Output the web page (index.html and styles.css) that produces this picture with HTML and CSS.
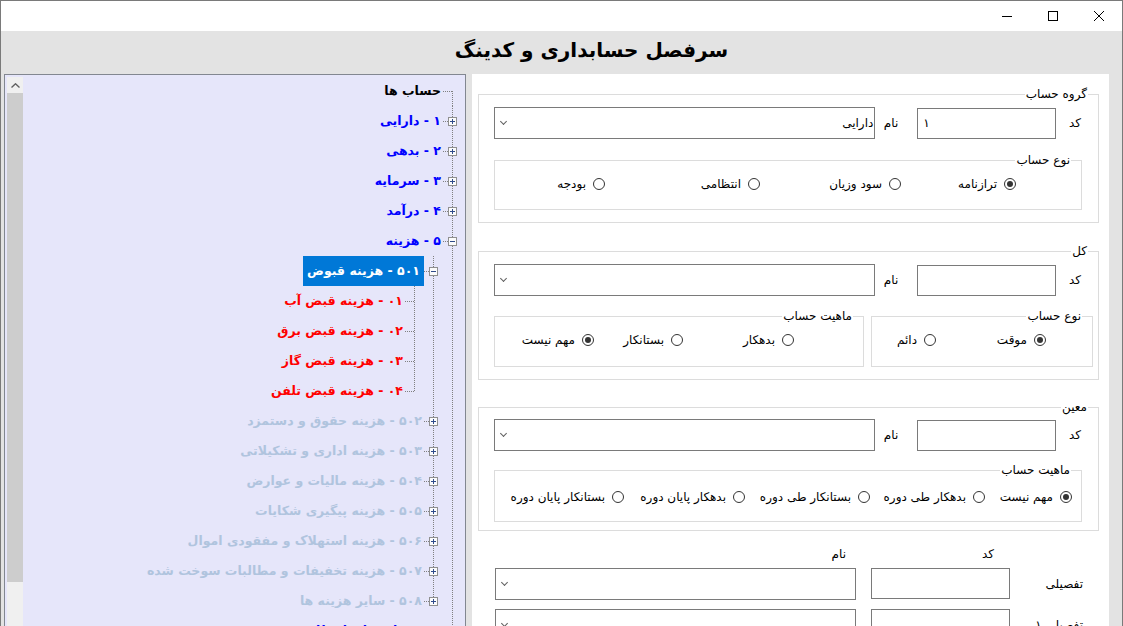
FILE: index.html
```html
<!DOCTYPE html>
<html lang="fa">
<head>
    <meta charset="UTF-8">
    <title>سرفصل حسابداری و کدینگ</title>
    <link rel="stylesheet" href="styles.css">
</head>
<body>

<div class="window">

    <!-- title bar buttons -->
    <div class="titlebar">
        <span class="ctl">
            <svg width="10" height="10" viewBox="0 0 10 10"><line x1="0" y1="5.5" x2="10" y2="5.5" stroke="#000" stroke-width="1"/></svg>
        </span>
        <span class="ctl">
            <svg width="10" height="10" viewBox="0 0 10 10"><rect x="0.5" y="0.5" width="9" height="9" fill="none" stroke="#000" stroke-width="1"/></svg>
        </span>
        <span class="ctl">
            <svg width="10" height="10" viewBox="0 0 10 10"><path d="M0 0 L10 10 M10 0 L0 10" stroke="#000" stroke-width="1"/></svg>
        </span>
    </div>

    <div class="caption">
        <h1>سرفصل حسابداری و کدینگ</h1>
    </div>

    <div class="main">

        <!-- accounts tree -->
        <div class="tree-panel">
            <div class="scrollbar">
                <div class="sb-up">
                    <svg width="9" height="5" viewBox="0 0 9 5"><polyline points="0.5,4.5 4.5,0.8 8.5,4.5" fill="none" stroke="#606060" stroke-width="1.4"/></svg>
                </div>
                <div class="sb-thumb"></div>
                <div class="sb-track"></div>
            </div>

            <div class="tree">
                <div class="node c-black">
                    <span class="col first"></span>
                    <span class="label">حساب ها</span>
                </div>
                <div class="node c-blue">
                    <span class="col tee"><i class="box plus"></i></span>
                    <span class="label">۱ - دارایی</span>
                </div>
                <div class="node c-blue">
                    <span class="col tee"><i class="box plus"></i></span>
                    <span class="label">۲ - بدهی</span>
                </div>
                <div class="node c-blue">
                    <span class="col tee"><i class="box plus"></i></span>
                    <span class="label">۳ - سرمایه</span>
                </div>
                <div class="node c-blue">
                    <span class="col tee"><i class="box plus"></i></span>
                    <span class="label">۴ - درآمد</span>
                </div>
                <div class="node c-blue">
                    <span class="col tee"><i class="box minus"></i></span>
                    <span class="label">۵ - هزینه</span>
                </div>

                <div class="node selected">
                    <span class="col pipe"></span>
                    <span class="col tee"><i class="box minus"></i></span>
                    <span class="label">۵۰۱ - هزینه قبوض</span>
                </div>
                <div class="node c-red">
                    <span class="col pipe"></span>
                    <span class="col pipe"></span>
                    <span class="col tee"></span>
                    <span class="label">۰۱ - هزینه قبض آب</span>
                </div>
                <div class="node c-red">
                    <span class="col pipe"></span>
                    <span class="col pipe"></span>
                    <span class="col tee"></span>
                    <span class="label">۰۲ - هزینه قبض برق</span>
                </div>
                <div class="node c-red">
                    <span class="col pipe"></span>
                    <span class="col pipe"></span>
                    <span class="col tee"></span>
                    <span class="label">۰۳ - هزینه قبض گاز</span>
                </div>
                <div class="node c-red">
                    <span class="col pipe"></span>
                    <span class="col pipe"></span>
                    <span class="col elbow"></span>
                    <span class="label">۰۴ - هزینه قبض تلفن</span>
                </div>

                <div class="node c-gray">
                    <span class="col pipe"></span>
                    <span class="col tee"><i class="box plus"></i></span>
                    <span class="label">۵۰۲ - هزینه حقوق و دستمزد</span>
                </div>
                <div class="node c-gray">
                    <span class="col pipe"></span>
                    <span class="col tee"><i class="box plus"></i></span>
                    <span class="label">۵۰۳ - هزینه اداری و تشکیلاتی</span>
                </div>
                <div class="node c-gray">
                    <span class="col pipe"></span>
                    <span class="col tee"><i class="box plus"></i></span>
                    <span class="label">۵۰۴ - هزینه مالیات و عوارض</span>
                </div>
                <div class="node c-gray">
                    <span class="col pipe"></span>
                    <span class="col tee"><i class="box plus"></i></span>
                    <span class="label">۵۰۵ - هزینه پیگیری شکایات</span>
                </div>
                <div class="node c-gray">
                    <span class="col pipe"></span>
                    <span class="col tee"><i class="box plus"></i></span>
                    <span class="label">۵۰۶ - هزینه استهلاک و مفقودی اموال</span>
                </div>
                <div class="node c-gray">
                    <span class="col pipe"></span>
                    <span class="col tee"><i class="box plus"></i></span>
                    <span class="label">۵۰۷ - هزینه تخفیفات و مطالبات سوخت شده</span>
                </div>
                <div class="node c-gray">
                    <span class="col pipe"></span>
                    <span class="col elbow"><i class="box plus"></i></span>
                    <span class="label">۵۰۸ - سایر هزینه ها</span>
                </div>

                <div class="node c-blue">
                    <span class="col tee"><i class="box plus"></i></span>
                    <span class="label">۶ - حساب های انتظامی</span>
                </div>
            </div>
        </div>

        <!-- account editor -->
        <div class="form-panel">

            <fieldset class="group g1">
                <legend>گروه حساب</legend>
                <div class="field-row">
                    <span class="lbl-code">کد</span>
                    <span class="textbox">۱</span>
                    <span class="lbl-name">نام</span>
                    <span class="combo"><span class="combo-text">دارایی</span><i class="chev"></i></span>
                </div>
                <fieldset class="sub">
                    <legend>نوع حساب</legend>
                    <div class="radios r-g1">
                        <label class="radio"><i class="dot on"></i>ترازنامه</label>
                        <label class="radio"><i class="dot"></i>سود وزیان</label>
                        <label class="radio"><i class="dot"></i>انتظامی</label>
                        <label class="radio"><i class="dot"></i>بودجه</label>
                    </div>
                </fieldset>
            </fieldset>

            <fieldset class="group g2">
                <legend>کل</legend>
                <div class="field-row">
                    <span class="lbl-code">کد</span>
                    <span class="textbox"></span>
                    <span class="lbl-name">نام</span>
                    <span class="combo"><span class="combo-text"></span><i class="chev"></i></span>
                </div>
                <div class="sub-pair">
                    <fieldset class="sub kind">
                        <legend>نوع حساب</legend>
                        <div class="radios r-kind">
                            <label class="radio"><i class="dot on"></i>موقت</label>
                            <label class="radio"><i class="dot"></i>دائم</label>
                        </div>
                    </fieldset>
                    <fieldset class="sub nature">
                        <legend>ماهیت حساب</legend>
                        <div class="radios r-nature">
                            <label class="radio"><i class="dot"></i>بدهکار</label>
                            <label class="radio"><i class="dot"></i>بستانکار</label>
                            <label class="radio"><i class="dot on"></i>مهم نیست</label>
                        </div>
                    </fieldset>
                </div>
            </fieldset>

            <fieldset class="group g3">
                <legend>معین</legend>
                <div class="field-row">
                    <span class="lbl-code">کد</span>
                    <span class="textbox"></span>
                    <span class="lbl-name">نام</span>
                    <span class="combo"><span class="combo-text"></span><i class="chev"></i></span>
                </div>
                <fieldset class="sub">
                    <legend>ماهیت حساب</legend>
                    <div class="radios r-g3">
                        <label class="radio"><i class="dot on"></i>مهم نیست</label>
                        <label class="radio"><i class="dot"></i>بدهکار طی دوره</label>
                        <label class="radio"><i class="dot"></i>بستانکار طی دوره</label>
                        <label class="radio"><i class="dot"></i>بدهکار پایان دوره</label>
                        <label class="radio"><i class="dot"></i>بستانکار پایان دوره</label>
                    </div>
                </fieldset>
            </fieldset>

            <div class="detail-grid">
                <span></span>
                <span class="head head-code">کد</span>
                <span class="head head-name">نام</span>

                <span class="row-lbl">تفصیلی</span>
                <span class="textbox"></span>
                <span class="combo"><span class="combo-text"></span><i class="chev"></i></span>

                <span class="row-lbl">تفصیلی ۱</span>
                <span class="textbox"></span>
                <span class="combo"><span class="combo-text"></span><i class="chev"></i></span>
            </div>
        </div>

    </div>
</div>

</body>
</html>
```

FILE: styles.css
```css
/* Base */
* {
    box-sizing: border-box;
}

body {
    margin: 0;
    font-family: "DejaVu Sans", sans-serif;
    overflow: hidden;
}

.window {
    width: 1123px;
    height: 626px;
    border: 1px solid #7a7a7a;
    border-bottom: none;
    background: #e3e3e3;
    display: flex;
    flex-direction: column;
    overflow: hidden;
}

/* Title bar */
.titlebar {
    height: 30px;
    flex-shrink: 0;
    background: #fff;
    display: flex;
    justify-content: flex-end;
}

.ctl {
    width: 46px;
    height: 30px;
    display: flex;
    align-items: center;
    justify-content: center;
}

.caption {
    height: 43px;
    flex-shrink: 0;
    display: flex;
    align-items: center;
    justify-content: center;
    padding: 0 0 6px 60px;
}

.caption h1 {
    margin: 0;
    font-size: 20px;
    font-weight: bold;
    direction: rtl;
}

.main {
    flex: 1;
    min-height: 0;
    display: flex;
    gap: 6px;
    padding-left: 3px;
}

/* Tree panel */
.tree-panel {
    width: 462px;
    flex-shrink: 0;
    display: flex;
    background: #e6e6fa;
    border: 1px solid #828790;
    border-bottom: none;
}

.scrollbar {
    width: 16px;
    margin: 2px 0 0 2px;
    display: flex;
    flex-direction: column;
}

.sb-up {
    height: 16px;
    background: #f0f0f0;
    display: flex;
    align-items: center;
    justify-content: center;
}

.sb-thumb {
    height: 489px;
    background: #cdcdcd;
}

.sb-track {
    flex: 1;
    background: #f0f0f0;
}

.tree {
    flex: 1;
    direction: rtl;
    padding: 1px 3px 0 0;
    font-size: 12.5px;
    font-weight: bold;
}

.node {
    height: 30px;
    display: flex;
    align-items: center;
}

.col {
    width: 19px;
    height: 30px;
    flex-shrink: 0;
    display: flex;
    align-items: center;
    justify-content: center;
    background-repeat: no-repeat;
}

/* dotted connector lines */
.col.pipe {
    background-image: repeating-linear-gradient(to bottom, #808080 0 1px, transparent 1px 2px);
    background-position: 9px 0;
    background-size: 1px 30px;
}

.col.tee {
    background-image:
        repeating-linear-gradient(to bottom, #808080 0 1px, transparent 1px 2px),
        repeating-linear-gradient(to right, #808080 0 1px, transparent 1px 2px);
    background-position: 9px 0, 0 15px;
    background-size: 1px 30px, 9px 1px;
}

.col.elbow {
    background-image:
        repeating-linear-gradient(to bottom, #808080 0 1px, transparent 1px 2px),
        repeating-linear-gradient(to right, #808080 0 1px, transparent 1px 2px);
    background-position: 9px 0, 0 15px;
    background-size: 1px 16px, 9px 1px;
}

.col.first {
    background-image:
        repeating-linear-gradient(to bottom, #808080 0 1px, transparent 1px 2px),
        repeating-linear-gradient(to right, #808080 0 1px, transparent 1px 2px);
    background-position: 9px 15px, 0 15px;
    background-size: 1px 15px, 10px 1px;
}

.box {
    width: 9px;
    height: 9px;
    border: 1px solid #8f8f8f;
    background-color: #fbfbfb;
    background-repeat: no-repeat;
}

.box.plus {
    background-image:
        linear-gradient(#2f4a8a, #2f4a8a),
        linear-gradient(#2f4a8a, #2f4a8a);
    background-position: 1px 3px, 3px 1px;
    background-size: 5px 1px, 1px 5px;
}

.box.minus {
    background-image: linear-gradient(#2f4a8a, #2f4a8a);
    background-position: 1px 3px;
    background-size: 5px 1px;
}

.label {
    padding: 0 2px;
    line-height: 30px;
    white-space: nowrap;
}

.c-black { color: #000; }
.c-blue { color: #0000ff; }
.c-red { color: #ff0000; }
.c-gray { color: #b0c4de; }

.selected .label {
    background: #0078d7;
    color: #fff;
    padding: 0 4px;
}

/* Form panel */
.form-panel {
    width: 637px;
    flex-shrink: 0;
    background: #fff;
    padding: 13px 10px 0 6px;
    direction: rtl;
    font-size: 12px;
    color: #000;
}

fieldset {
    margin: 0;
    min-width: 0;
    border: 1px solid #dcdcdc;
}

legend {
    padding: 0 1px;
    line-height: 14px;
    font-size: 12px;
}

.group {
    padding: 0 16px 12px 15px;
}

.group > legend {
    margin-right: -6px;
}

.g2 { margin-top: 21px; }
.g3 { margin-top: 20px; padding-bottom: 8px; }

.field-row {
    display: flex;
    align-items: center;
    height: 32px;
    margin-top: 6px;
}

.g3 .field-row { margin-top: 5px; }

.lbl-code {
    width: 26px;
    padding-right: 1px;
}

.lbl-name {
    width: 42px;
    padding-right: 19px;
}

.textbox {
    width: 139px;
    height: 31px;
    border: 1px solid #7a7a7a;
    direction: ltr;
    padding-left: 5px;
    display: flex;
    align-items: center;
}

.combo {
    width: 382px;
    height: 32px;
    border: 1px solid #7a7a7a;
    display: flex;
    align-items: center;
    justify-content: space-between;
    padding: 0 1px 0 6px;
}

.chev {
    width: 5px;
    height: 5px;
    border-right: 1px solid #606060;
    border-bottom: 1px solid #606060;
    transform: rotate(45deg);
    margin-bottom: 3px;
}

/* inner group boxes */
.sub {
    padding: 0 0 16px 0;
}

.sub > legend {
    margin-right: 10px;
}

.g1 .sub { margin-top: 14px; }

.sub-pair {
    display: flex;
    gap: 7px;
    margin-top: 13px;
    margin-right: -11px;
}

.sub.kind { width: 222px; padding-bottom: 17px; }
.sub.nature { width: 370px; padding-bottom: 17px; }

.g3 .sub { margin-top: 12px; padding-bottom: 15px; }

.radios {
    display: grid;
    height: 18px;
    margin-top: 8px;
    align-items: center;
}

.g3 .radios { margin-top: 11px; }

.r-g1 {
    padding-right: 65px;
    grid-template-columns: 115px 141px 155px auto;
}

.r-kind {
    padding-right: 46px;
    grid-template-columns: 110px auto;
}

.r-nature {
    padding-right: 69px;
    grid-template-columns: 111px 89px auto;
}

.r-g3 {
    padding-right: 9px;
    grid-template-columns: 87px 115px 125px 121px auto;
}

.radio {
    display: flex;
    align-items: center;
    gap: 7px;
    white-space: nowrap;
}

.dot {
    width: 12px;
    height: 12px;
    flex-shrink: 0;
    border: 1px solid #333;
    border-radius: 50%;
    background: #fff;
    display: flex;
    align-items: center;
    justify-content: center;
}

.dot.on::after {
    content: "";
    width: 6px;
    height: 6px;
    border-radius: 50%;
    background: #333;
}

/* detail rows under the groups */
.detail-grid {
    display: grid;
    grid-template-columns: 73px 139px 376px;
    grid-template-rows: 11px 31px 31px;
    row-gap: 10px;
    margin: 16px 16px 0 15px;
}

.detail-grid .combo {
    width: 361px;
    margin-right: 15px;
    height: 32px;
}

.head {
    line-height: 14px;
    align-self: start;
}

.head-code { padding-right: 16px; }
.head-name { padding-right: 25px; }

.row-lbl {
    display: flex;
    align-items: center;
}
```
